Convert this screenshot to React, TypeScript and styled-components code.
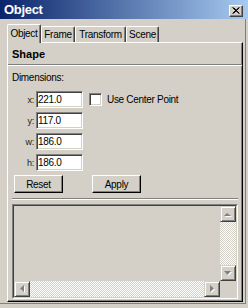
import React from "react";
import styled, { createGlobalStyle } from "styled-components";

const GlobalStyle = createGlobalStyle`
  html, body {
    margin: 0;
    padding: 0;
    background: #d4d0c8;
  }
  * {
    box-sizing: border-box;
  }
`;

const FONT = `"Liberation Sans", Arial, sans-serif`;

const Window = styled.div`
  width: 248px;
  height: 308px;
  background: #d4d0c8;
  overflow: hidden;
  font-family: ${FONT};
  font-size: 10px;
  letter-spacing: -0.3px;
  color: #000000;
`;

const TitleBar = styled.div`
  height: 19px;
  display: flex;
  align-items: center;
  justify-content: space-between;
  padding: 0 5px 0 4px;
  background: linear-gradient(to right, #0a246a, #a6caf0);
`;

const TitleText = styled.div`
  font-weight: 700;
  font-size: 13px;
  line-height: 19px;
  color: #ffffff;
  letter-spacing: -0.3px;
`;

const CloseButton = styled.div`
  width: 14px;
  height: 12px;
  margin-top: 2px;
  display: flex;
  align-items: center;
  justify-content: center;
  background: #d4d0c8;
  border: 1px solid;
  border-color: #ffffff #404040 #404040 #ffffff;
  box-shadow: inset -1px -1px 0 #808080;
`;

const Body = styled.div`
  width: 246px;
  height: 285px;
  padding: 5px 2px 1px 7px;
  border-right: 1px solid #808080;
  border-bottom: 1px solid #808080;
  display: flex;
  flex-direction: column;
`;

const TabStrip = styled.div`
  display: flex;
  align-items: flex-end;
  height: 18px;
  position: relative;
  z-index: 1;
`;

const Tab = styled.div<{ $active?: boolean; $width: number }>`
  width: ${(p) => p.$width}px;
  height: ${(p) => (p.$active ? 19 : 16)}px;
  margin-bottom: ${(p) => (p.$active ? -1 : 0)}px;
  background: #d4d0c8;
  border-top: 1px solid #ffffff;
  border-left: 1px solid #ffffff;
  border-right: 1px solid #404040;
  border-radius: 2px 2px 0 0;
  box-shadow: inset -1px 0 0 #808080;
  display: flex;
  align-items: ${(p) => (p.$active ? "flex-start" : "center")};
  padding-top: ${(p) => (p.$active ? 3 : 0)}px;
  justify-content: center;
  line-height: 12px;
  white-space: nowrap;
`;

const Panel = styled.div`
  flex: 1;
  display: flex;
  flex-direction: column;
  border-top: 1px solid #ffffff;
  border-left: 1px solid #ffffff;
  border-right: 1px solid #000000;
  border-bottom: 1px solid #000000;
  box-shadow: inset -1px -1px 0 #808080;
  padding-bottom: 2px;
`;

const Header = styled.div`
  height: 22px;
  padding: 5px 4px 0;
  font-weight: 700;
  font-size: 11px;
  line-height: 13px;
  letter-spacing: 0;
  border-bottom: 1px solid #808080;
  box-shadow: 0 1px 0 #ffffff;
`;

const Content = styled.div`
  flex: 1;
  display: flex;
  flex-direction: column;
  padding: 0 4px 0 4px;
`;

const SectionLabel = styled.div`
  margin-top: 7px;
  line-height: 12px;
`;

const Fields = styled.div`
  margin-top: 7px;
  display: flex;
  flex-direction: column;
  gap: 4px;
`;

const FieldRow = styled.div`
  display: flex;
  align-items: center;
  height: 17px;
`;

const FieldLabel = styled.div`
  width: 22px;
  margin-right: 2px;
  text-align: right;
  font-size: 9px;
  color: #202020;
`;

const FieldInput = styled.input`
  width: 47px;
  height: 17px;
  padding: 0 1px;
  margin: 0;
  font-family: ${FONT};
  font-size: 10px;
  letter-spacing: -0.3px;
  color: #000000;
  background: #ffffff;
  border: 1px solid;
  border-color: #808080 #ffffff #ffffff #808080;
  box-shadow: inset 1px 1px 0 #404040, inset -1px -1px 0 #d4d0c8;
  outline: none;
`;

const CheckBox = styled.span`
  width: 13px;
  height: 13px;
  margin-left: 6px;
  background: #ffffff;
  border: 1px solid;
  border-color: #808080 #ffffff #ffffff #808080;
  box-shadow: inset 1px 1px 0 #404040, inset -1px -1px 0 #d4d0c8;
`;

const CheckText = styled.span`
  margin-left: 5px;
`;

const ButtonRow = styled.div`
  display: flex;
  margin-top: 4px;
  padding-left: 2px;
  gap: 29px;
`;

const Button = styled.div`
  width: 49px;
  height: 18px;
  display: flex;
  align-items: center;
  justify-content: center;
  background: #d4d0c8;
  border: 1px solid;
  border-color: #ffffff #000000 #000000 #ffffff;
  box-shadow: inset -1px -1px 0 #808080;
`;

const Separator = styled.div`
  margin-top: 5px;
  height: 2px;
  border-top: 1px solid #808080;
  border-bottom: 1px solid #ffffff;
`;

const ListBox = styled.div`
  flex: 1;
  margin-top: 4px;
  display: grid;
  grid-template-columns: 1fr 16px;
  grid-template-rows: 1fr 16px;
  border: 1px solid;
  border-color: #808080 #ffffff #ffffff #808080;
  padding: 1px;
  position: relative;
  &::before {
    content: "";
    position: absolute;
    inset: 0;
    border: 1px solid;
    border-color: #404040 #d4d0c8 #d4d0c8 #404040;
    pointer-events: none;
  }
`;

const ScrollBar = styled.div<{ $vertical?: boolean }>`
  display: flex;
  flex-direction: ${(p) => (p.$vertical ? "column" : "row")};
`;

const Track = styled.div`
  flex: 1;
  background-color: #d4d0c8;
  background-image: conic-gradient(
    #ffffff 25%,
    #d4d0c8 0 50%,
    #ffffff 0 75%,
    #d4d0c8 0
  );
  background-size: 2px 2px;
`;

const ScrollButton = styled.div`
  width: 16px;
  height: 16px;
  flex: none;
  display: flex;
  align-items: center;
  justify-content: center;
  background: #d4d0c8;
  border: 1px solid;
  border-color: #d4d0c8 #404040 #404040 #d4d0c8;
  box-shadow: inset 1px 1px 0 #ffffff, inset -1px -1px 0 #808080;
`;

const Corner = styled.div`
  background: #d4d0c8;
`;

type Dir = "up" | "down" | "left" | "right";

const Arrow = ({ dir }: { dir: Dir }) => {
  const shapes: Record<Dir, string> = {
    up: "3,1 0,4 7,4",
    down: "0,0 7,0 3.5,4",
    left: "0,3.5 4,0 4,7",
    right: "0,0 4,3.5 0,7",
  };
  const vertical = dir === "up" || dir === "down";
  const w = vertical ? 7 : 4;
  const h = vertical ? 4 : 7;
  return (
    <svg width={w + 1} height={h + 1} viewBox={`0 0 ${w + 1} ${h + 1}`}>
      <polygon points={shapes[dir]} fill="#ffffff" transform="translate(1 1)" />
      <polygon points={shapes[dir]} fill="#808080" />
    </svg>
  );
};

const fields = [
  { label: "x:", value: "221.0" },
  { label: "y:", value: "117.0" },
  { label: "w:", value: "186.0" },
  { label: "h:", value: "186.0" },
];

const tabs = [
  { name: "Object", width: 34 },
  { name: "Frame", width: 34 },
  { name: "Transform", width: 51 },
  { name: "Scene", width: 33 },
];

export default function App() {
  return (
    <>
      <GlobalStyle />
      <Window>
        <TitleBar>
          <TitleText>Object</TitleText>
          <CloseButton>
            <svg width="8" height="7" viewBox="0 0 8 7">
              <path d="M0.5 0.5 L7 6.5 M1.5 0.5 L7.5 6.5 M7 0.5 L0.5 6.5 M7.5 0.5 L1.5 6.5" stroke="#000" strokeWidth="1" />
            </svg>
          </CloseButton>
        </TitleBar>
        <Body>
          <TabStrip>
            {tabs.map((t, i) => (
              <Tab key={t.name} $active={i === 0} $width={t.width}>
                {t.name}
              </Tab>
            ))}
          </TabStrip>
          <Panel>
            <Header>Shape</Header>
            <Content>
              <SectionLabel>Dimensions:</SectionLabel>
              <Fields>
                {fields.map((f, i) => (
                  <FieldRow key={f.label}>
                    <FieldLabel>{f.label}</FieldLabel>
                    <FieldInput readOnly value={f.value} />
                    {i === 0 && (
                      <>
                        <CheckBox />
                        <CheckText>Use Center Point</CheckText>
                      </>
                    )}
                  </FieldRow>
                ))}
              </Fields>
              <ButtonRow>
                <Button>Reset</Button>
                <Button>Apply</Button>
              </ButtonRow>
              <Separator />
              <ListBox>
                <Corner />
                <ScrollBar $vertical>
                  <ScrollButton>
                    <Arrow dir="up" />
                  </ScrollButton>
                  <Track />
                  <ScrollButton>
                    <Arrow dir="down" />
                  </ScrollButton>
                </ScrollBar>
                <ScrollBar>
                  <ScrollButton>
                    <Arrow dir="left" />
                  </ScrollButton>
                  <Track />
                  <ScrollButton>
                    <Arrow dir="right" />
                  </ScrollButton>
                </ScrollBar>
                <Corner />
              </ListBox>
            </Content>
          </Panel>
        </Body>
      </Window>
    </>
  );
}
